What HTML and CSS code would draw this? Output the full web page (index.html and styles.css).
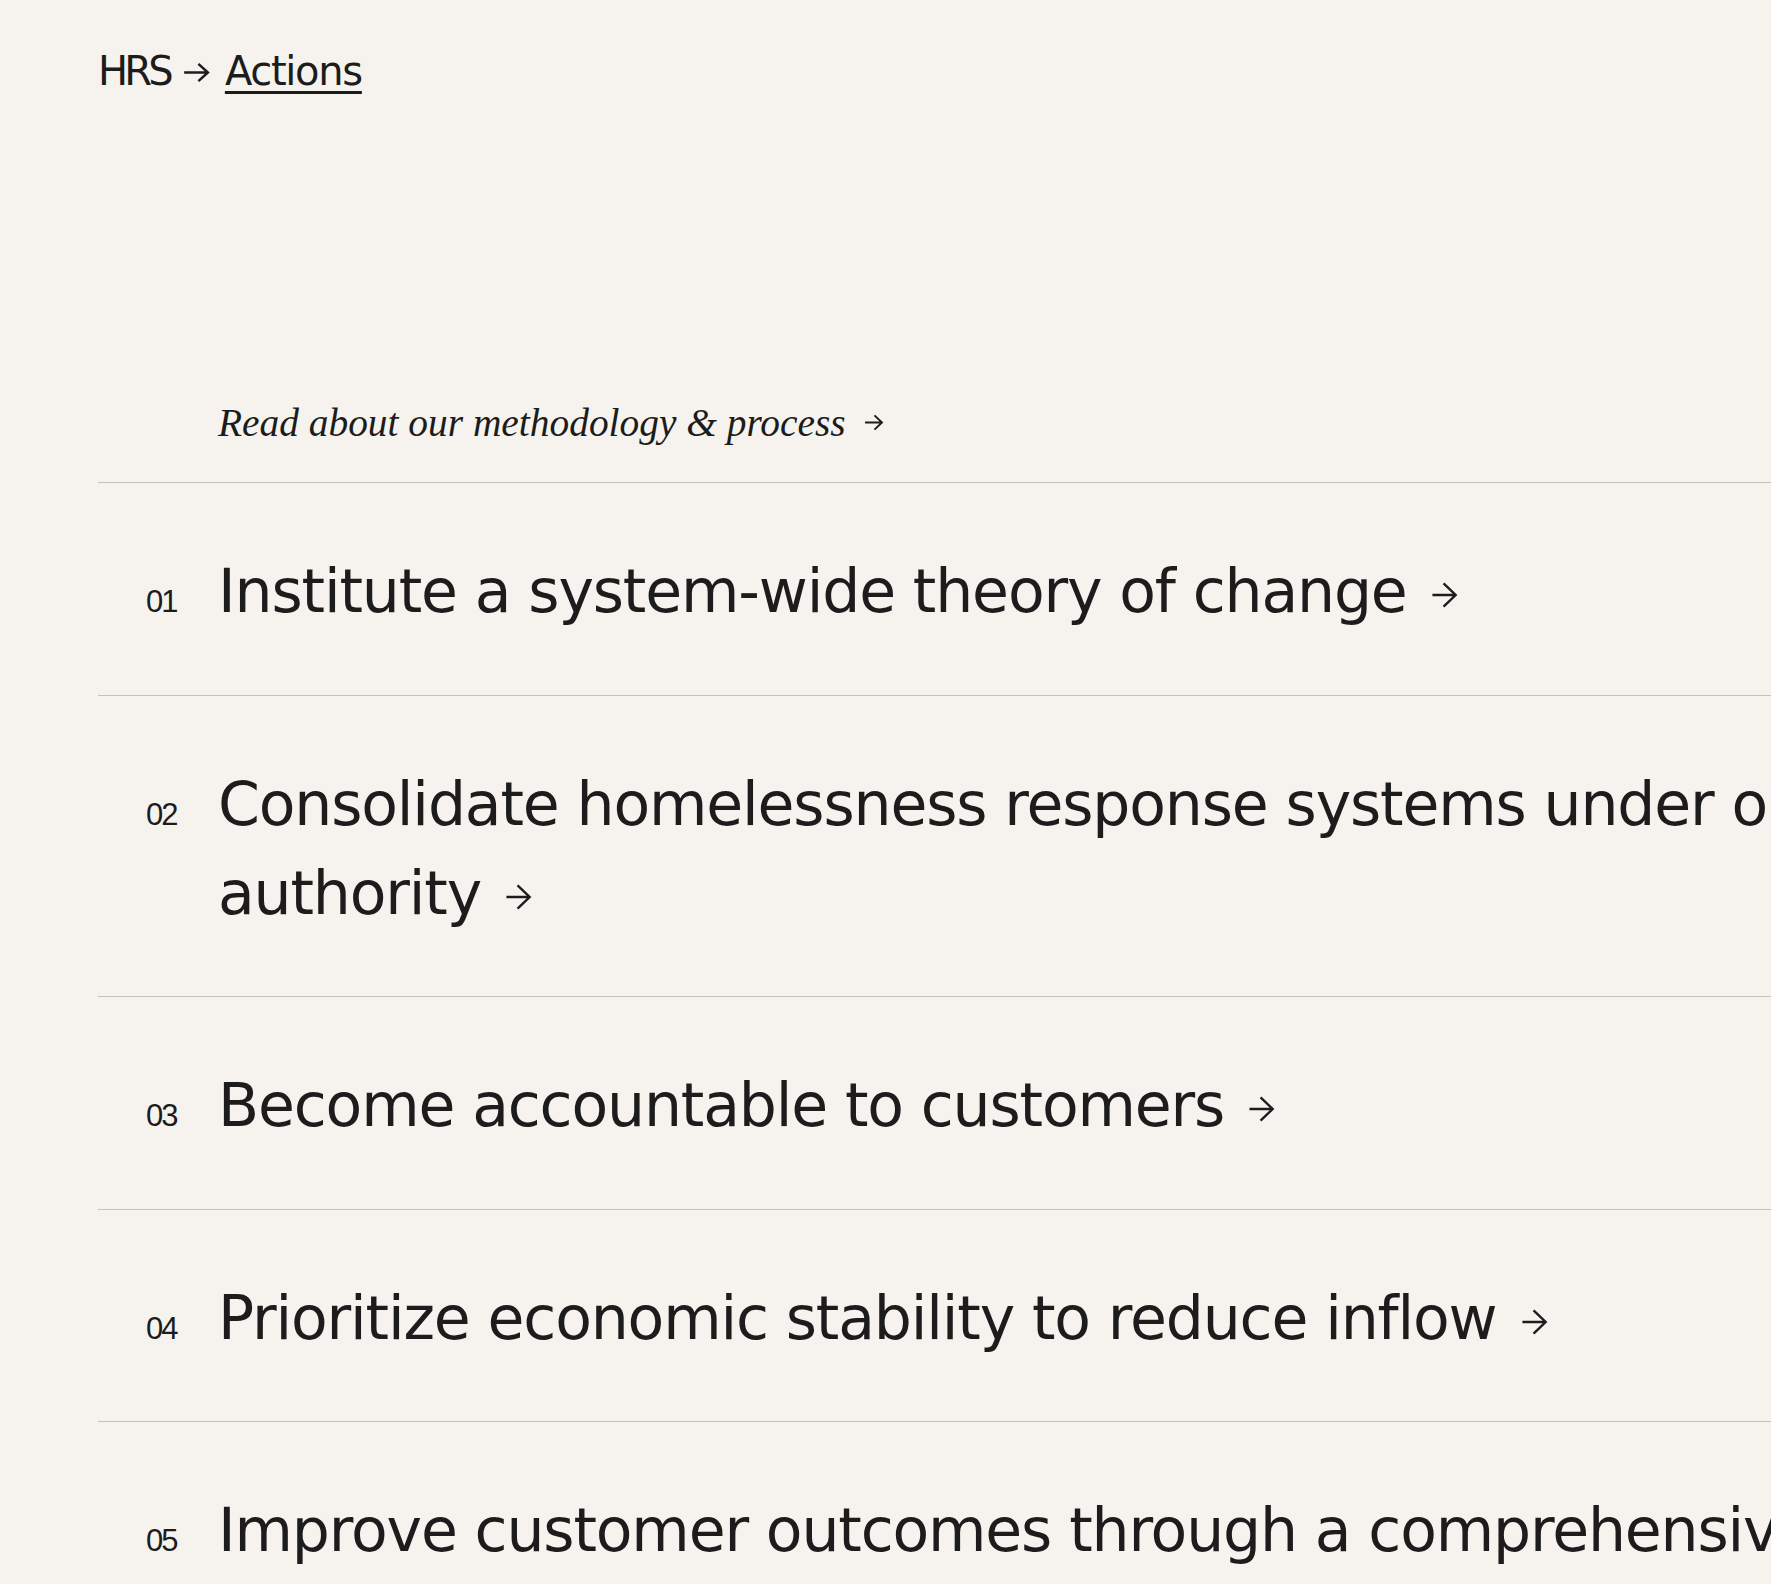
FILE: index.html
```html
<!DOCTYPE html>
<html lang="en">
<head>
<meta charset="utf-8">
<title>HRS → Actions</title>
<link rel="stylesheet" href="styles.css">
</head>
<body>
<div class="page">
  <nav class="crumbs">
    <span class="crumb">HRS</span>
    <svg class="crumb-arrow" viewBox="0 0 28 20" aria-hidden="true"><path d="M1 10 H26 M16 1 L26 10 L16 19"/></svg>
    <a class="crumb-link" href="#">Actions</a>
  </nav>

  <p class="method"><a href="#">Read about our methodology &amp; process<svg class="method-arrow" viewBox="0 0 21 18" aria-hidden="true"><path d="M1 9 H19 M11 1.5 L19 9 L11 16.5"/></svg></a></p>

  <ol class="actions">
    <li class="action">
      <span class="num">01</span>
      <a class="title" href="#">Institute a system-wide theory of change<svg class="arrow" viewBox="0 0 28 28" aria-hidden="true"><path d="M1 14 H26 M13 1.5 L26 14 L13 26.5"/></svg></a>
    </li>
    <li class="action">
      <span class="num">02</span>
      <a class="title" href="#">Consolidate homelessness response systems under one authority<svg class="arrow" viewBox="0 0 28 28" aria-hidden="true"><path d="M1 14 H26 M13 1.5 L26 14 L13 26.5"/></svg></a>
    </li>
    <li class="action">
      <span class="num">03</span>
      <a class="title" href="#">Become accountable to customers<svg class="arrow" viewBox="0 0 28 28" aria-hidden="true"><path d="M1 14 H26 M13 1.5 L26 14 L13 26.5"/></svg></a>
    </li>
    <li class="action">
      <span class="num">04</span>
      <a class="title" href="#">Prioritize economic stability to reduce inflow<svg class="arrow" viewBox="0 0 28 28" aria-hidden="true"><path d="M1 14 H26 M13 1.5 L26 14 L13 26.5"/></svg></a>
    </li>
    <li class="action">
      <span class="num">05</span>
      <a class="title" href="#">Improve customer outcomes through a comprehensive data strategy<svg class="arrow" viewBox="0 0 28 28" aria-hidden="true"><path d="M1 14 H26 M13 1.5 L26 14 L13 26.5"/></svg></a>
    </li>
  </ol>
</div>
</body>
</html>
```

FILE: styles.css
```css
html, body {
  margin: 0;
  padding: 0;
  background: #f6f3ee;
  color: #1c1c1c;
  overflow-x: hidden;
  scrollbar-width: none;
}
html::-webkit-scrollbar, body::-webkit-scrollbar {
  display: none;
}

a {
  color: inherit;
  text-decoration: none;
}

.page {
  width: 2000px;
  padding: 47px 0 0 98px;
}

/* breadcrumb */
.crumbs {
  display: flex;
  align-items: baseline;
  font-family: "DejaVu Sans", sans-serif;
  font-size: 40px;
  line-height: 48px;
  letter-spacing: -1.3px;
  height: 48px;
}
.crumb {
  letter-spacing: -3.8px;
}
.crumb-arrow {
  width: 27px;
  height: 19px;
  margin: 0 15px 0 13px;
  position: relative;
  top: -3px;
  fill: none;
  stroke: #1c1c1c;
  stroke-width: 2.6;
}
.crumb-link {
  text-decoration: underline;
  text-decoration-thickness: 3px;
  text-underline-offset: 6px;
}

/* methodology link */
.method {
  margin: 304px 0 35px 120px;
  font-family: "Liberation Serif", "Times New Roman", serif;
  font-style: italic;
  font-size: 39.4px;
  line-height: 48px;
}
.method-arrow {
  width: 20px;
  height: 17px;
  margin-left: 18px;
  vertical-align: 5px;
  fill: none;
  stroke: #1c1c1c;
  stroke-width: 2;
}

/* action list */
.actions {
  list-style: none;
  margin: 0;
  padding: 0;
  border-top: 1px solid #c4c2bd;
}
.action {
  display: flex;
  align-items: baseline;
  padding: 64px 0 58.5px;
  border-bottom: 1px solid #c4c2bd;
}
.num {
  flex: 0 0 120px;
  box-sizing: border-box;
  padding-left: 48px;
  font-family: "Liberation Sans", Arial, sans-serif;
  font-size: 31px;
  letter-spacing: -2px;
}
.title {
  flex: 1;
  font-family: "DejaVu Sans", sans-serif;
  font-size: 60px;
  line-height: 89px;
  letter-spacing: -1.15px;
}
.arrow {
  width: 27px;
  height: 26px;
  margin-left: 24px;
  vertical-align: 4px;
  fill: none;
  stroke: #1c1c1c;
  stroke-width: 2.6;
}
```
